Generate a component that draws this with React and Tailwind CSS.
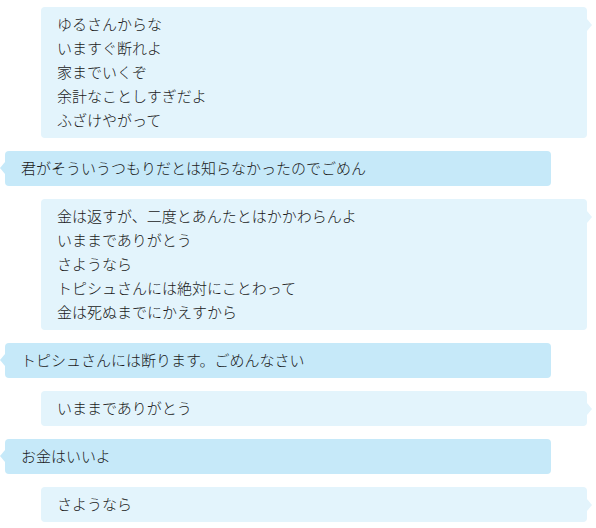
const messages = [
  { side: 'right', lines: ['ゆるさんからな', 'いますぐ断れよ', '家までいくぞ', '余計なことしすぎだよ', 'ふざけやがって'] },
  { side: 'left', lines: ['君がそういうつもりだとは知らなかったのでごめん'] },
  { side: 'right', lines: ['金は返すが、二度とあんたとはかかわらんよ', 'いままでありがとう', 'さようなら', 'トピシュさんには絶対にことわって', '金は死ぬまでにかえすから'] },
  { side: 'left', lines: ['トピシュさんには断ります。ごめんなさい'] },
  { side: 'right', lines: ['いままでありがとう'] },
  { side: 'left', lines: ['お金はいいよ'] },
  { side: 'right', lines: ['さようなら'] },
];

function Bubble({ side, lines }) {
  const isRight = side === 'right';
  return (
    <div
      className={`relative w-[546px] rounded-[4px] px-4 pt-[5px] pb-[6px] ${
        isRight ? 'ml-[41px] bg-[#e3f4fc]' : 'ml-[5px] bg-[#c6e9f9]'
      }`}
    >
      {isRight ? (
        <span className="absolute right-[-5px] top-[12px] w-0 h-0 border-y-[6px] border-y-transparent border-l-[5px] border-l-[#e3f4fc]" />
      ) : (
        <span className="absolute left-[-5px] top-[11px] w-0 h-0 border-y-[6px] border-y-transparent border-r-[5px] border-r-[#c6e9f9]" />
      )}
      {lines.map((line, i) => (
        <p key={i} className="leading-6 text-[15px] font-light text-[#1a1a1a]">{line}</p>
      ))}
    </div>
  );
}

export default function App() {
  return (
    <div
      className="w-[596px] h-[528px] overflow-hidden bg-white pt-[7px]"
      style={{ fontFamily: '"Noto Sans CJK JP", "Noto Sans", sans-serif' }}
    >
      <div className="flex flex-col gap-[13px]">
        {messages.map((m, i) => (
          <Bubble key={i} side={m.side} lines={m.lines} />
        ))}
      </div>
    </div>
  );
}
